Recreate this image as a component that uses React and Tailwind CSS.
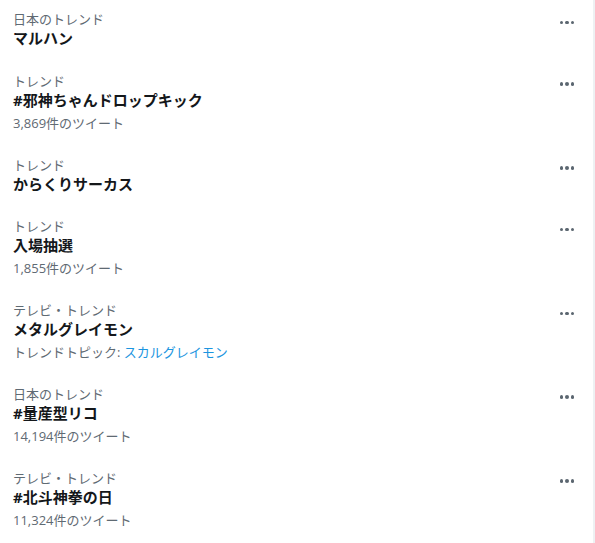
import React from "react";

const items = [
  { label: "日本のトレンド", title: "マルハン" },
  { label: "トレンド", title: "#邪神ちゃんドロップキック", sub: "3,869件のツイート" },
  { label: "トレンド", title: "からくりサーカス" },
  { label: "トレンド", title: "入場抽選", sub: "1,855件のツイート" },
  { label: "テレビ・トレンド", title: "メタルグレイモン", topic: "スカルグレイモン" },
  { label: "日本のトレンド", title: "#量産型リコ", sub: "14,194件のツイート" },
  { label: "テレビ・トレンド", title: "#北斗神拳の日", sub: "11,324件のツイート" },
];

function Dots() {
  return (
    <div className="flex self-start items-center gap-[2px] pt-[10.5px]">
      <span className="block w-[3.5px] h-[3.5px] rounded-full bg-[#5b6670]" />
      <span className="block w-[3.5px] h-[3.5px] rounded-full bg-[#5b6670]" />
      <span className="block w-[3.5px] h-[3.5px] rounded-full bg-[#5b6670]" />
    </div>
  );
}

export default function App() {
  return (
    <div
      className="w-[595px] h-[543px] bg-white overflow-hidden border-r-2 border-[#eef1f3]"
      style={{ fontFamily: '"Open Sans", "Noto Sans CJK JP", sans-serif' }}
    >
      {items.map((it, i) => (
        <div key={i} className="flex items-start justify-between pl-[13px] pr-[19px] pt-[10px] pb-[12.75px]">
          <div className="flex flex-col">
            <div className="text-[13px] leading-[18px] text-[#5f6a73]">{it.label}</div>
            <div className="text-[15px] leading-[21px] font-bold text-[#14171a]">{it.title}</div>
            {it.sub && (
              <div className="text-[13px] leading-[20px] mt-[2px] text-[#5f6a73]">{it.sub}</div>
            )}
            {it.topic && (
              <div className="text-[13px] leading-[20px] mt-[2px] text-[#5f6a73]">
                トレンドトピック: <span className="text-[#1b95e0]">{it.topic}</span>
              </div>
            )}
          </div>
          <Dots />
        </div>
      ))}
    </div>
  );
}
